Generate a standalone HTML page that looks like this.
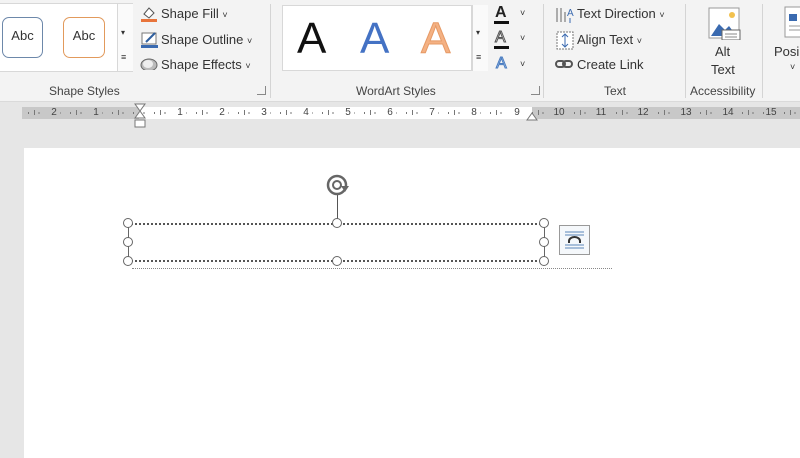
<!DOCTYPE html>
<html><head><meta charset="utf-8"><style>
*{margin:0;padding:0;box-sizing:border-box}
body{width:800px;height:450px;overflow:hidden;background:#e6e6e6;font-family:"Liberation Sans",sans-serif;position:relative;color:#333}
.a{position:absolute}
.rib{left:0;top:0;width:800px;height:102px;background:#f3f3f3;border-bottom:1px solid #dadada}
.t{font-size:13px;color:#333;white-space:nowrap}
.lbl{font-size:12px;color:#444;top:84px}
.sep{width:1px;background:#d4d4d4;top:4px;height:94px}
.gal{background:#fff;border:1px solid #d8d8d8}
.sb{width:16px;border-left:1px solid #d8d8d8;background:#fafafa}
.hd{width:10px;height:10px;border:1.5px solid #666;border-radius:50%;background:#fff}
.num{top:107px;font-size:10px;color:#444;width:12px;text-align:center;line-height:12px}
</style></head><body>
<div class="a rib"></div>
<div class="a gal" style="left:-2px;top:3px;width:135px;height:69px"></div>
<div class="a" style="left:2px;top:17px;width:41px;height:41px;border:1.5px solid #6d88aa;border-radius:7px;background:#fff;font-size:13px;text-align:center;line-height:36px">Abc</div>
<div class="a" style="left:63px;top:17px;width:42px;height:41px;border:1.5px solid #e29a5c;border-radius:7px;background:#fff;font-size:13px;text-align:center;line-height:36px">Abc</div>
<div class="a sb" style="left:117px;top:4px;height:67px"></div>
<div class="a t" style="left:121px;top:28px;font-size:8px">▾</div>
<div class="a t" style="left:121px;top:52px;font-size:9px">≡</div>
<svg class="a" style="left:138px;top:4px" width="22" height="66">
<path d="M6 10 L11 4 L16 9 L11 14 Z" fill="#fff" stroke="#555"/><rect x="3" y="15" width="16" height="3" fill="#e8743b"/>
<rect x="4" y="29" width="14" height="11" fill="#fff" stroke="#777"/><path d="M8 38 L17 29" stroke="#2f5f9e" stroke-width="2"/><rect x="3" y="41" width="17" height="3" fill="#3a6ab0"/>
<ellipse cx="11" cy="61" rx="8" ry="6" fill="#bbb" stroke="#666"/><ellipse cx="10" cy="60" rx="5" ry="4" fill="#eee"/>
</svg>
<div class="a t" style="left:161px;top:6px">Shape Fill <span style="font-size:9px">˅</span></div>
<div class="a t" style="left:161px;top:32px">Shape Outline <span style="font-size:9px">˅</span></div>
<div class="a t" style="left:161px;top:57px">Shape Effects <span style="font-size:9px">˅</span></div>
<div class="a lbl" style="left:49px">Shape Styles</div>
<div class="a" style="left:257px;top:86px;width:9px;height:9px;border:1px solid #888;border-top:none;border-left:none"></div>
<div class="a sep" style="left:270px"></div>
<div class="a gal" style="left:282px;top:5px;width:190px;height:66px"></div>
<div class="a" style="left:297px;top:14px;font-size:44px;color:#111;line-height:50px">A</div>
<div class="a" style="left:360px;top:14px;font-size:44px;color:#4472c4;line-height:50px">A</div>
<div class="a" style="left:421px;top:14px;font-size:44px;color:#f4b183;line-height:50px;-webkit-text-stroke:1px #e69a66">A</div>
<div class="a sb" style="left:472px;top:5px;height:66px"></div>
<div class="a t" style="left:476px;top:28px;font-size:8px">▾</div>
<div class="a t" style="left:476px;top:52px;font-size:9px">≡</div>
<div class="a" style="left:495px;top:4px;font-size:16px;font-weight:bold;color:#222">A</div><div class="a" style="left:494px;top:21px;width:15px;height:3px;background:#111"></div>
<div class="a" style="left:495px;top:29px;font-size:16px;color:#fff;-webkit-text-stroke:1px #555">A</div><div class="a" style="left:494px;top:46px;width:15px;height:3px;background:#111"></div>
<div class="a" style="left:496px;top:55px;font-size:16px;color:#bcd3ee;-webkit-text-stroke:1px #4a7cc0">A</div>
<div class="a t" style="left:520px;top:8px;font-size:9px">˅</div>
<div class="a t" style="left:520px;top:33px;font-size:9px">˅</div>
<div class="a t" style="left:520px;top:59px;font-size:9px">˅</div>
<div class="a lbl" style="left:356px">WordArt Styles</div>
<div class="a" style="left:531px;top:86px;width:9px;height:9px;border:1px solid #888;border-top:none;border-left:none"></div>
<div class="a sep" style="left:543px"></div>
<svg class="a" style="left:554px;top:4px" width="22" height="66">
<path d="M3 4V18M7 4V18M11 8V18" stroke="#666"/><text x="13" y="12" font-size="10" fill="#3a6ab0" font-family="Liberation Sans">A</text><path d="M16 14V19" stroke="#3a6ab0"/>
<rect x="3" y="28" width="16" height="17" fill="#fff" stroke="#777" stroke-dasharray="2 1"/><path d="M11 30V43M8 33L11 30L14 33M8 40L11 43L14 40" stroke="#3a6ab0" fill="none"/>
<rect x="2" y="57" width="9" height="6" rx="3" fill="none" stroke="#555" stroke-width="2"/><rect x="9" y="57" width="9" height="6" rx="3" fill="none" stroke="#555" stroke-width="2"/>
</svg>
<div class="a t" style="left:577px;top:6px">Text Direction <span style="font-size:9px">˅</span></div>
<div class="a t" style="left:577px;top:32px">Align Text <span style="font-size:9px">˅</span></div>
<div class="a t" style="left:577px;top:57px">Create Link</div>
<div class="a lbl" style="left:604px">Text</div>
<div class="a sep" style="left:685px"></div>
<svg class="a" style="left:707px;top:6px" width="36" height="34">
<rect x="2" y="2" width="30" height="30" fill="#fff" stroke="#999"/><circle cx="25" cy="9" r="3" fill="#f2c14e"/><path d="M4 30L12 18L18 24L22 20L28 28V30Z" fill="#3a6ab0"/><rect x="15" y="24" width="18" height="10" fill="#fff" stroke="#666"/><path d="M18 28H30M18 31H30" stroke="#888"/>
</svg>
<div class="a t" style="left:715px;top:44px">Alt</div>
<div class="a t" style="left:711px;top:62px">Text</div>
<div class="a lbl" style="left:690px">Accessibility</div>
<div class="a sep" style="left:762px"></div>
<svg class="a" style="left:784px;top:6px" width="20" height="34"><rect x="1" y="1" width="20" height="30" fill="#fff" stroke="#999"/><rect x="5" y="8" width="8" height="7" fill="#3a6ab0"/><path d="M5 20H18M5 24H18" stroke="#999"/></svg>
<div class="a t" style="left:774px;top:44px">Posi</div>
<div class="a t" style="left:790px;top:62px;font-size:9px">˅</div>
<!-- ruler -->
<div class="a" style="left:22px;top:107px;width:778px;height:12px;background:#c8c8c8"></div>
<div class="a" style="left:139px;top:107px;width:393px;height:12px;background:#fff"></div>
<div class="a" style="left:22px;top:112px;width:778px;height:2px;background:repeating-linear-gradient(90deg,transparent 0 6px,#777 6px 7px,transparent 7px 10.5px)"></div>
<div class="a" style="left:22px;top:110px;width:778px;height:5px;background:repeating-linear-gradient(90deg,transparent 0 12px,#777 12px 13px,transparent 13px 42px)"></div>
<div class="a num" style="left:48px;background:#c8c8c8">2</div>
<div class="a num" style="left:90px;background:#c8c8c8">1</div>
<div class="a num" style="left:174px;background:#fff">1</div>
<div class="a num" style="left:216px;background:#fff">2</div>
<div class="a num" style="left:258px;background:#fff">3</div>
<div class="a num" style="left:300px;background:#fff">4</div>
<div class="a num" style="left:342px;background:#fff">5</div>
<div class="a num" style="left:384px;background:#fff">6</div>
<div class="a num" style="left:426px;background:#fff">7</div>
<div class="a num" style="left:468px;background:#fff">8</div>
<div class="a num" style="left:511px;background:#fff">9</div>
<div class="a num" style="left:552px;background:#c8c8c8;width:14px">10</div>
<div class="a num" style="left:594px;background:#c8c8c8;width:14px">11</div>
<div class="a num" style="left:636px;background:#c8c8c8;width:14px">12</div>
<div class="a num" style="left:679px;background:#c8c8c8;width:14px">13</div>
<div class="a num" style="left:721px;background:#c8c8c8;width:14px">14</div>
<div class="a num" style="left:764px;background:#c8c8c8;width:14px">15</div>
<svg class="a" style="left:133px;top:103px" width="14" height="26"><path d="M2 1H12L7 8Z M7 8L2 15H12Z" fill="#fff" stroke="#777"/><rect x="2" y="17" width="10" height="7" fill="#fff" stroke="#777"/></svg>
<svg class="a" style="left:526px;top:110px" width="12" height="12"><path d="M1 10L6 3L11 10Z" fill="#fff" stroke="#777"/></svg>
<div class="a" style="left:24px;top:148px;width:780px;height:310px;background:#fff"></div>
<div class="a" style="left:128px;top:223px;width:417px;height:39px;border-top:2px dotted #555;border-bottom:2px dotted #555"></div>
<div class="a" style="left:128px;top:223px;width:1px;height:39px;background:#666"></div>
<div class="a" style="left:544px;top:223px;width:1px;height:39px;background:#666"></div>
<div class="a" style="left:132px;top:268px;width:480px;border-top:1px dotted #888"></div>
<div class="a" style="left:337px;top:195px;width:1px;height:28px;background:#555"></div>
<svg class="a" style="left:325px;top:173px" width="30" height="24"><circle cx="12" cy="12" r="9" fill="none" stroke="#666" stroke-width="2.5"/><circle cx="12" cy="12" r="4" fill="none" stroke="#666" stroke-width="2"/><path d="M16 13L24 13L20 19Z" fill="#666"/></svg>
<div class="a hd" style="left:123px;top:218px"></div>
<div class="a hd" style="left:332px;top:218px"></div>
<div class="a hd" style="left:539px;top:218px"></div>
<div class="a hd" style="left:123px;top:237px"></div>
<div class="a hd" style="left:539px;top:237px"></div>
<div class="a hd" style="left:123px;top:256px"></div>
<div class="a hd" style="left:332px;top:256px"></div>
<div class="a hd" style="left:539px;top:256px"></div>
<svg class="a" style="left:559px;top:225px" width="32" height="31"><rect x="0.5" y="0.5" width="30" height="29" fill="#f5f8fb" stroke="#999"/><path d="M6 7H25M6 10H25M6 20H25M6 23H25" stroke="#5a86b8"/><path d="M10 18V16A5.5 4 0 0 1 21 16V18" stroke="#333" stroke-width="2" fill="none"/></svg>
</body></html>
